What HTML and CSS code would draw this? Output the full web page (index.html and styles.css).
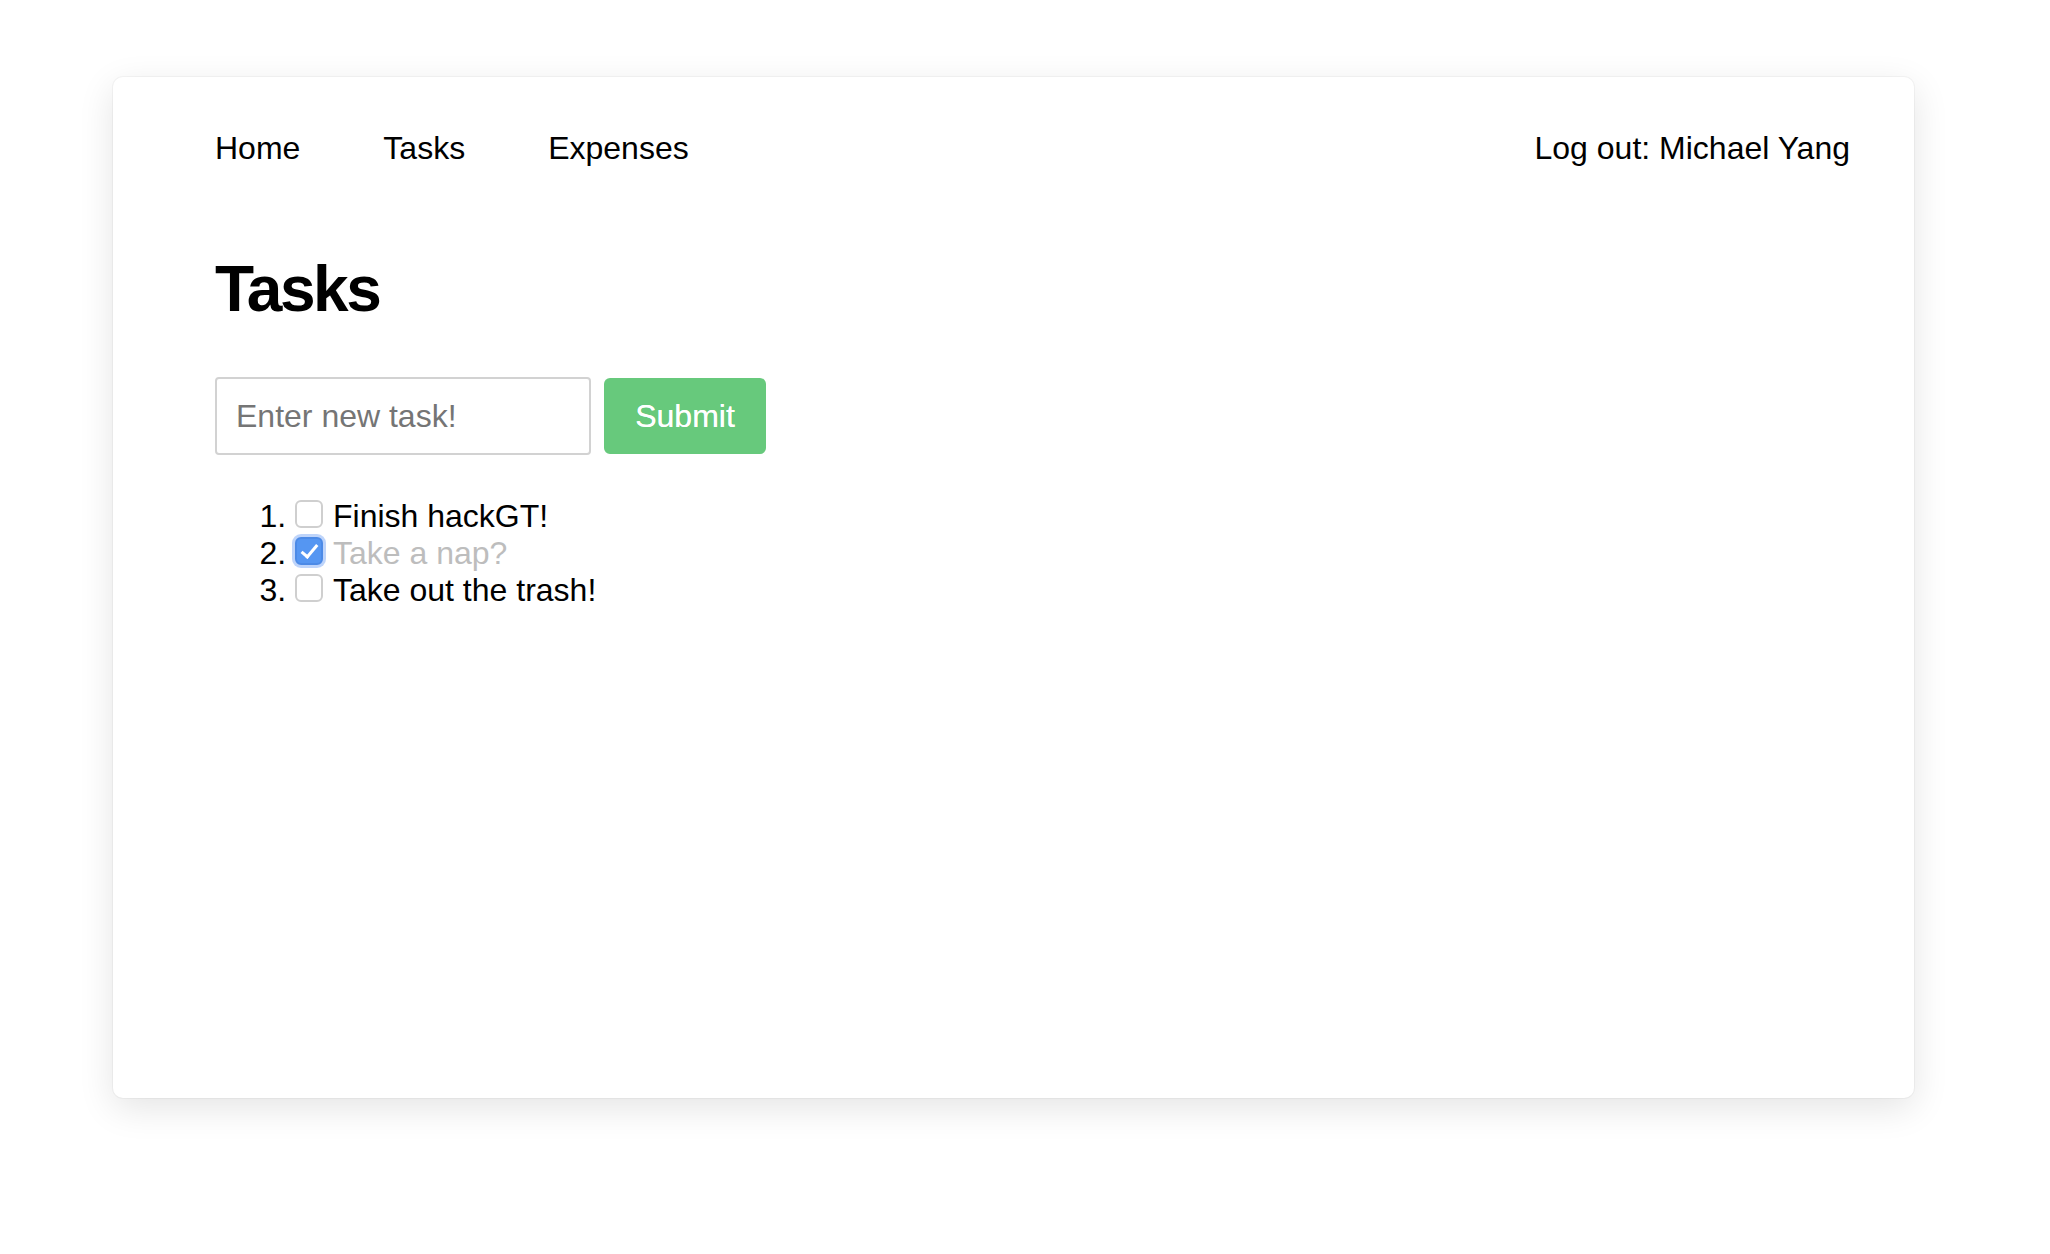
FILE: index.html
```html
<!DOCTYPE html>
<html>
<head>
  <title>Tasks</title>
  <link rel="stylesheet" href="styles.css">
</head>
<body>
  <div class="card">
    <nav class="nav">
      <div class="nav-links">
        <a href="#">Home</a>
        <a href="#">Tasks</a>
        <a href="#">Expenses</a>
      </div>
      <a href="#" class="logout">Log out: Michael Yang</a>
    </nav>

    <h1>Tasks</h1>

    <form class="task-form">
      <input type="text" class="task-input" placeholder="Enter new task!">
      <button type="button" class="submit-button">Submit</button>
    </form>

    <ol class="task-list">
      <li><input type="checkbox"><span>Finish hackGT!</span></li>
      <li class="done"><input type="checkbox" checked><span>Take a nap?</span></li>
      <li><input type="checkbox"><span>Take out the trash!</span></li>
    </ol>
  </div>
</body>
</html>
```

FILE: styles.css
```css
body {
  margin: 0;
  padding: 77px 0 100px 113px;
  background-color: #fff;
  font-family: "Liberation Sans", Arial, sans-serif;
  font-size: 32px;
  color: #000;
}
.card {
  width: 1801px;
  height: 1021px;
  box-sizing: border-box;
  padding: 53px 64px 0 102px;
  background-color: #fff;
  border-radius: 10px;
  box-shadow: 0 0 0 1px rgba(0, 0, 0, 0.035), 0 10px 36px rgba(0, 0, 0, 0.11);
}
.nav {
  display: flex;
  justify-content: space-between;
  align-items: center;
}
.nav-links {
  display: flex;
  gap: 83px;
}
.nav a {
  color: #000;
  text-decoration: none;
}
h1 {
  margin: 90px 0 0;
  font-size: 64px;
  line-height: 64px;
  font-weight: bold;
  letter-spacing: -2.5px;
}
.task-form {
  display: flex;
  align-items: center;
  gap: 13px;
  margin-top: 56px;
}
.task-input {
  width: 376px;
  height: 78px;
  box-sizing: border-box;
  padding: 0 19px;
  border: 2px solid #d2d2d2;
  border-radius: 4px;
  font-family: inherit;
  font-size: 32px;
  color: #333;
}
.task-input::placeholder {
  color: #757575;
}
.submit-button {
  width: 162px;
  height: 76px;
  border: none;
  border-radius: 6px;
  background-color: #67c97c;
  color: #fff;
  font-family: inherit;
  font-size: 32px;
  text-shadow: 0 0 0.6px #fff;
  cursor: pointer;
}
.task-list {
  margin: 43px 0 0;
  padding-left: 80px;
}
.task-list input[type="checkbox"] {
  appearance: none;
  position: relative;
  width: 28px;
  height: 28px;
  margin: 0 10px 0 0;
  box-sizing: border-box;
  border: 2px solid #cfcfcf;
  border-radius: 6px;
  background-color: #fff;
  vertical-align: -1px;
}
.task-list input[type="checkbox"]:checked {
  background-color: #5596f2;
  border-color: #4c8ae6;
  box-shadow: 0 0 0 3px rgba(110, 160, 245, 0.45);
}
.task-list input[type="checkbox"]:checked::after {
  content: "";
  position: absolute;
  left: 8px;
  top: 2px;
  width: 6px;
  height: 14px;
  border-right: 3px solid #fff;
  border-bottom: 3px solid #fff;
  transform: rotate(40deg);
}
.done span {
  color: #bdbdbd;
}
```
